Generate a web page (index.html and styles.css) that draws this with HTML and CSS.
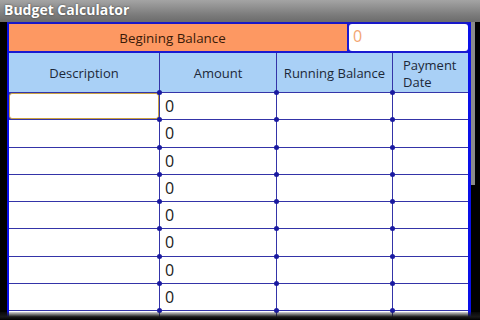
FILE: index.html
```html
<!DOCTYPE html>
<html>
<head>
<meta charset="utf-8">
<link rel="stylesheet" href="styles.css">
</head>
<body>
<div class="screen">
  <div class="titlebar">Budget Calculator</div>
  <div class="content">
    <div class="panel">
      <div class="balance">
        <div class="balance-label">Begining Balance</div>
        <div class="balance-input">0</div>
      </div>
      <div class="grid">
        <div class="hcell">Description</div>
        <div class="hcell">Amount</div>
        <div class="hcell">Running Balance</div>
        <div class="hcell hleft">Payment<br>Date</div>

        <div class="cell focus"></div><div class="cell num dot">0</div><div class="cell dot"></div><div class="cell dot"></div>
        <div class="cell"></div><div class="cell num dot">0</div><div class="cell dot"></div><div class="cell dot"></div>
        <div class="cell"></div><div class="cell num dot">0</div><div class="cell dot"></div><div class="cell dot"></div>
        <div class="cell"></div><div class="cell num dot">0</div><div class="cell dot"></div><div class="cell dot"></div>
        <div class="cell"></div><div class="cell num dot">0</div><div class="cell dot"></div><div class="cell dot"></div>
        <div class="cell"></div><div class="cell num dot">0</div><div class="cell dot"></div><div class="cell dot"></div>
        <div class="cell"></div><div class="cell num dot">0</div><div class="cell dot"></div><div class="cell dot"></div>
        <div class="cell"></div><div class="cell num dot">0</div><div class="cell dot"></div><div class="cell dot"></div>
        <div class="cell"></div><div class="cell dot"></div><div class="cell dot"></div><div class="cell dot"></div>
      </div>
    </div>
    <div class="scrollbar"><div class="thumb"></div></div>
  </div>
  <div class="fade"></div>
</div>
</body>
</html>
```

FILE: styles.css
```css
html, body {
  margin: 0;
  padding: 0;
  background: #000;
}
.screen {
  position: relative;
  width: 480px;
  height: 320px;
  overflow: hidden;
  background: #000;
  font-family: "Open Sans", "Noto Sans", sans-serif;
}
.titlebar {
  height: 22px;
  box-sizing: border-box;
  padding-left: 4px;
  line-height: 20px;
  font-size: 14px;
  font-weight: bold;
  color: #fff;
  text-shadow: 0 0 2px rgba(0,0,0,0.6);
  background: linear-gradient(#a4a4a4, #7a7a7a 70%, #6c6c6c);
}
.content {
  display: flex;
  padding-left: 7px;
}
.panel {
  width: 459px;
  border-left: 2px solid #0a10e8;
  border-right: 3px solid #0a10e8;
  border-top: 2px solid #1818c8;
  background: #2a2aa0;
}
.balance {
  display: flex;
  height: 27px;
  gap: 2px;
  background: #1a1ad0;
  border-bottom: 2px solid #1a1ad0;
}
.balance-label {
  width: 338px;
  background: #fd9862;
  color: #3a1a08;
  font-size: 13.4px;
  line-height: 28px;
  text-align: center;
  box-sizing: border-box;
  padding-right: 11px;
}
.balance-input {
  flex: 1;
  background: #fff;
  border-radius: 3px;
  color: #f3a673;
  font-size: 16px;
  line-height: 25px;
  padding-left: 4px;
}
.grid {
  display: grid;
  grid-template-columns: 150px 116px 115px 75px;
  grid-template-rows: 39px;
  grid-auto-rows: 26.3px;
  gap: 1px;
  background: #3434a8;
}
.hcell {
  background: #a9d0f6;
  color: #1c2838;
  font-size: 13px;
  display: flex;
  align-items: center;
  justify-content: center;
  text-align: center;
  line-height: 17px;
  padding-top: 2px;
}
.hcell.hleft {
  justify-content: flex-start;
  text-align: left;
  padding-left: 10px;
  padding-top: 3px;
}
.cell {
  position: relative;
  background: #fff;
  color: #202020;
  font-size: 16px;
  line-height: 26px;
}
.cell.num {
  padding-left: 5px;
}
.cell.focus {
  box-sizing: border-box;
  border: 1.5px solid #c9a142;
  border-radius: 3px;
  background: #fff;
}
.cell.dot::before {
  content: "";
  position: absolute;
  left: -3px;
  top: -3px;
  width: 5px;
  height: 5px;
  border-radius: 50%;
  background: #1a1aa0;
}
.scrollbar {
  width: 4px;
}
.thumb {
  height: 163px;
  background: #8a8a8a;
}
.fade {
  position: absolute;
  left: 0;
  right: 0;
  bottom: 0;
  height: 8px;
  background: linear-gradient(rgba(40,40,40,0.2), #1a1a1a 60%, #000);
}
```
